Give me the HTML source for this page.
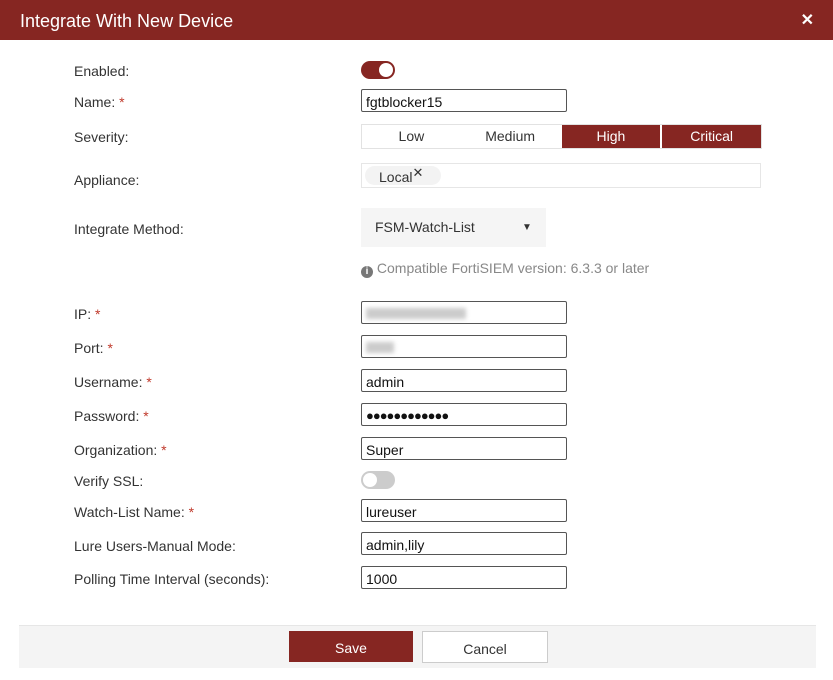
<!DOCTYPE html>
<html><head><style>
body{margin:0;width:833px;height:680px;background:#fff;font-family:"Liberation Sans",sans-serif;position:relative;overflow:hidden;color:#333}
.hd{position:absolute;left:0;top:0;width:833px;height:40px;background:#862622;color:#fff}
.hd .t{position:absolute;left:20px;top:11px;font-size:18px}
.hd .x{position:absolute;right:19px;top:10px;font-size:16px;font-weight:bold}
.l{position:absolute;left:74px;font-size:14px;color:#333}
.l b{color:#c0392b;font-weight:normal}
.in{position:absolute;left:361px;height:21px;border:1px solid #555;border-radius:2px;font-size:14px;line-height:24px;padding-left:4px;box-sizing:content-box;color:#111;width:200px}
.blur{position:absolute;top:6px;left:4px;height:11px;background:#ccc;filter:blur(2px)}
.tg{position:absolute;left:361px;width:34px;height:18px;border-radius:9px}
.tg i{position:absolute;top:2px;width:14px;height:14px;border-radius:50%;background:#fff}
.sev{position:absolute;left:361px;top:124px;width:399px;height:23px;border:1px solid #e2e2e2;display:flex;font-size:14px}
.sev div{flex:1;text-align:center;line-height:23px}
.sev .on{background:#862622;color:#fff;margin-left:2px}
</style></head><body>
<div class="hd"><span class="t">Integrate With New Device</span><span class="x">✕</span></div>

<div class="l" style="top:63px">Enabled:</div>
<div class="tg" style="top:61px;background:#862622"><i style="right:2px"></i></div>
<div class="l" style="top:94px">Name: <b>*</b></div>
<div class="in" style="top:89px">fgtblocker15</div>
<div class="l" style="top:129px">Severity:</div>
<div class="sev"><div>Low</div><div>Medium</div><div class="on">High</div><div class="on">Critical</div></div>
<div class="l" style="top:172px">Appliance:</div>
<div style="position:absolute;left:361px;top:163px;width:398px;height:23px;border:1px solid #e6e6e6"></div>
<div style="position:absolute;left:365px;top:166px;width:76px;height:19px;border-radius:10px;background:#f3f3f3;font-size:14px;line-height:22px;padding-left:14px;box-sizing:border-box;color:#333">Local<span style="position:relative;top:-5px;font-size:13px">✕</span></div>
<div class="l" style="top:221px">Integrate Method:</div>
<div style="position:absolute;left:361px;top:208px;width:185px;height:39px;background:#f5f5f5;font-size:14px;line-height:39px;padding-left:14px;box-sizing:border-box;color:#333">FSM-Watch-List<span style="position:absolute;left:161px;font-size:10px">▼</span></div>
<div style="position:absolute;left:361px;top:260px;font-size:14px;color:#888;line-height:17px"><span style="display:inline-block;width:12px;height:12px;border-radius:50%;background:#777;color:#fff;font-size:10px;line-height:12px;text-align:center;font-weight:bold;vertical-align:-1px">i</span> Compatible FortiSIEM version: 6.3.3 or later</div>

<div class="l" style="top:306px">IP: <b>*</b></div>
<div class="in" style="top:301px"><span class="blur" style="width:100px"></span></div>
<div class="l" style="top:340px">Port: <b>*</b></div>
<div class="in" style="top:335px"><span class="blur" style="width:28px"></span></div>
<div class="l" style="top:374px">Username: <b>*</b></div>
<div class="in" style="top:369px">admin</div>
<div class="l" style="top:408px">Password: <b>*</b></div>
<div class="in" style="top:403px;font-size:13px;letter-spacing:-1px">●●●●●●●●●●●●</div>
<div class="l" style="top:442px">Organization: <b>*</b></div>
<div class="in" style="top:437px">Super</div>
<div class="l" style="top:473px">Verify SSL:</div>
<div class="tg" style="top:471px;background:#ccc"><i style="left:2px"></i></div>
<div class="l" style="top:504px">Watch-List Name: <b>*</b></div>
<div class="in" style="top:499px">lureuser</div>
<div class="l" style="top:538px">Lure Users-Manual Mode:</div>
<div class="in" style="top:532px">admin,lily</div>
<div class="l" style="top:571px">Polling Time Interval (seconds):</div>
<div class="in" style="top:566px">1000</div>

<div style="position:absolute;left:19px;top:625px;width:797px;height:42px;background:#f4f4f4;border-top:1px solid #e6e6e6"></div>
<div style="position:absolute;left:289px;top:631px;width:124px;height:31px;background:#862622;color:#fff;font-size:14px;line-height:35px;text-align:center">Save</div>
<div style="position:absolute;left:422px;top:631px;width:124px;height:30px;background:#fff;border:1px solid #ccc;font-size:14px;line-height:35px;text-align:center;color:#333">Cancel</div>
</body></html>
